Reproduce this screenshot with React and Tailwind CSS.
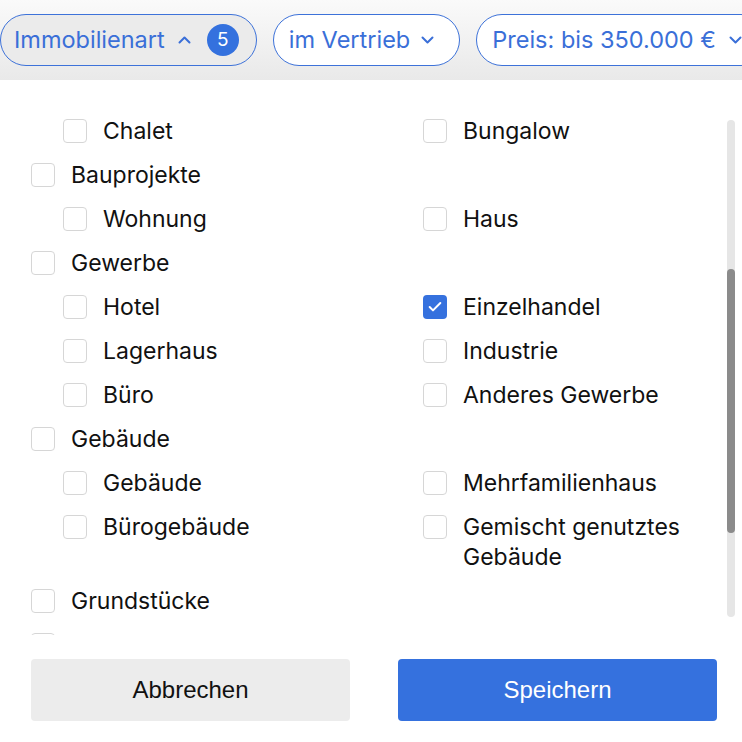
import { Check } from 'lucide-react'

const font = { fontFamily: 'Inter, "Noto Sans", sans-serif' }

const Chevron = ({ up, className }) => (
  <svg width="13" height="8" viewBox="0 0 13 8" fill="none" className={`shrink-0 ${className}`}>
    <path
      d={up ? 'M1.5 6.5L6.5 1.5L11.5 6.5' : 'M1.5 1.5L6.5 6.5L11.5 1.5'}
      stroke="currentColor"
      strokeWidth="2"
      strokeLinecap="round"
      strokeLinejoin="round"
    />
  </svg>
)

const Box = ({ checked }) =>
  checked ? (
    <span className="mt-[3px] flex h-6 w-6 shrink-0 items-center justify-center rounded-[4px] bg-[#3571de]">
      <Check size={16} strokeWidth={3} className="text-white" />
    </span>
  ) : (
    <span className="mt-[3px] h-6 w-6 shrink-0 rounded-[4px] border border-[#d6d6d6] bg-white" />
  )

const Item = ({ label, checked }) => (
  <label className="flex items-start gap-4 py-[7px]">
    <Box checked={checked} />
    {label && <span className="text-[23px] leading-[30px] text-[#111]">{label}</span>}
  </label>
)

const Children = ({ rows }) => (
  <div className="grid grid-cols-[360px_1fr] pl-8">
    {rows.flat().map((r, i) => (
      <Item key={i} label={r.label} checked={r.checked} />
    ))}
  </div>
)

const Pill = ({ children, active }) => (
  <div
    className={`flex h-[52px] shrink-0 items-center rounded-full border border-[#3d72d9] text-[23.5px] text-[#3a6fd8] ${
      active ? 'bg-[#ebebeb]' : 'bg-white'
    }`}
  >
    {children}
  </div>
)

export default function App() {
  return (
    <div className="relative flex h-[742px] w-[742px] flex-col overflow-hidden bg-white" style={font}>
      {/* filter bar */}
      <div className="flex h-20 shrink-0 items-center gap-4 bg-gradient-to-b from-[#fafafa] to-[#e9e9e9]">
        <Pill active>
          <span className="pl-[13px]">Immobilienart</span>
          <Chevron up className="ml-[13px]" />
          <span className="ml-[16px] mr-[17px] flex h-8 w-8 items-center justify-center rounded-full bg-[#3471de] text-[19px] text-white">
            5
          </span>
        </Pill>
        <Pill>
          <span className="pl-[15px]">im Vertrieb</span>
          <Chevron className="ml-[11px] mr-[25px]" />
        </Pill>
        <Pill>
          <span className="pl-[15px]">Preis: bis 350.000 €</span>
          <Chevron className="ml-[13px] mr-[24px]" />
        </Pill>
      </div>

      {/* scroll list */}
      <div className="relative h-[555px] shrink-0 overflow-hidden">
        <div className="pl-[31px] pr-[30px] pt-[29px]">
          <Children rows={[[{ label: 'Chalet' }, { label: 'Bungalow' }]]} />
          <Item label="Bauprojekte" />
          <Children rows={[[{ label: 'Wohnung' }, { label: 'Haus' }]]} />
          <Item label="Gewerbe" />
          <Children
            rows={[
              [{ label: 'Hotel' }, { label: 'Einzelhandel', checked: true }],
              [{ label: 'Lagerhaus' }, { label: 'Industrie' }],
              [{ label: 'Büro' }, { label: 'Anderes Gewerbe' }],
            ]}
          />
          <Item label="Gebäude" />
          <Children
            rows={[
              [{ label: 'Gebäude' }, { label: 'Mehrfamilienhaus' }],
              [{ label: 'Bürogebäude' }, { label: 'Gemischt genutztes Gebäude' }],
            ]}
          />
          <Item label="Grundstücke" />
          <Item />
        </div>

        {/* scrollbar */}
        <div className="absolute right-[7px] top-[40px] h-[497px] w-2 rounded-full bg-[#e6e6e6]">
          <div className="mt-[149px] h-[264px] w-2 rounded-full bg-[#8b8b8b]" />
        </div>
      </div>

      {/* footer */}
      <div className="flex flex-1 gap-12 pl-[31px] pt-6" style={{ fontFamily: '"Liberation Sans", Arial, sans-serif' }}>
        <button className="h-[62px] w-[319px] shrink-0 rounded-[4px] bg-[#ececec] text-[24px] text-[#111]">
          Abbrechen
        </button>
        <button className="h-[62px] w-[319px] shrink-0 rounded-[4px] bg-[#3571de] text-[24px] text-white">
          Speichern
        </button>
      </div>
    </div>
  )
}
